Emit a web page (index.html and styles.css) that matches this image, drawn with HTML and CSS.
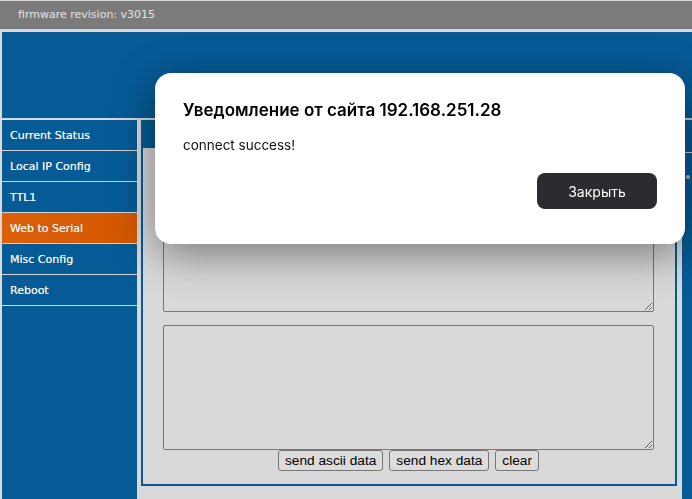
FILE: index.html
```html
<!DOCTYPE html>
<html lang="ru">
<head>
    <meta charset="UTF-8">
    <meta name="viewport" content="width=device-width, initial-scale=1.0">
    <title>Web to Serial</title>
    <link rel="stylesheet" href="styles.css">
</head>
<body>
    <div class="page">
        <div class="topbar">firmware revision: v3015</div>
        <div class="header"></div>

        <div class="main">
            <ul class="menu">
                <li>Current Status</li>
                <li>Local IP Config</li>
                <li>TTL1</li>
                <li class="active">Web to Serial</li>
                <li>Misc Config</li>
                <li>Reboot</li>
            </ul>

            <div class="panel">
                <div class="panel-title"></div>
                <div class="panel-body">
                    <textarea class="term" id="rx"></textarea>
                    <textarea class="term" id="tx"></textarea>
                    <div class="actions">
                        <button>send ascii data</button>
                        <button>send hex data</button>
                        <button>clear</button>
                    </div>
                </div>
            </div>

            <div class="side">
                <div class="side-item"></div>
                <div class="side-item"><span class="dot"></span></div>
            </div>
        </div>
    </div>

    <div class="dialog">
        <h2>Уведомление от сайта 192.168.251.28</h2>
        <p>connect success!</p>
        <div class="dialog-foot">
            <button class="btn-close">Закрыть</button>
        </div>
    </div>
</body>
</html>
```

FILE: styles.css
```css
html, body {
    margin: 0;
    padding: 0;
    overflow: hidden;
}
body {
    background: #d9d9d9;
    font-family: "DejaVu Sans", Verdana, sans-serif;
    height: 499px;
}
.page {
    width: 692px;
    padding-top: 1px;
}
.topbar {
    background: #7b7b7b;
    color: #e4e4e4;
    font-size: 11px;
    height: 28px;
    line-height: 28px;
    padding-left: 18px;
    box-sizing: border-box;
    margin-bottom: 3px;
    padding-bottom: 2px;
}
.header {
    background: #065b97;
    height: 86px;
    margin-left: 2px;
    margin-bottom: 2px;
}
.main {
    display: flex;
    align-items: flex-start;
    margin-left: 2px;
    height: 400px;
}
.menu {
    list-style: none;
    margin: 0;
    padding: 0;
    height: 400px;
    background: #065b97;
    flex: 0 0 135px;
}
.menu li {
    height: 30px;
    line-height: 31px;
    padding-left: 8px;
    color: #f0f0f0;
    font-size: 11px;
    border-bottom: 1px solid #d4d4d4;
    text-shadow: 0 0 0.3px #f0f0f0;
}
.menu li.active {
    background: linear-gradient(90deg, #db6008, #d45800);
}
.panel {
    flex: 0 0 536px;
    margin-left: 4px;
    border: 2px solid #065b97;
    box-sizing: border-box;
    background: #d9d9d9;
}
.panel-title {
    background: #065b97;
    height: 26px;
}
.panel-body {
    padding: 39px 21px 13px 20px;
}
.term {
    display: block;
    width: 491px;
    height: 125px;
    box-sizing: border-box;
    background: #d9d9d9;
    border: 1px solid #767676;
    border-radius: 2px;
    margin: 0 0 13px;
    resize: both;
}
#tx {
    margin-bottom: 0;
}
.actions {
    display: flex;
    justify-content: center;
    gap: 6px;
}
.actions button {
    font-family: "Liberation Sans", Arial, sans-serif;
    font-size: 13.7px;
    height: 21px;
    padding: 0 6px;
    background: #dcdcdc;
    border: 1px solid #767676;
    border-radius: 3px;
    color: #000;
}
.side {
    flex: 1;
    margin-left: 5px;
    margin-top: -2px;
    height: 402px;
    background: #065b97;
}
.side-item {
    height: 32px;
    border-top: 2px solid #cfcfcf;
}
.side-item + .side-item {
    border-top: 1px solid #cfcfcf;
}
.dot {
    display: block;
    width: 4px;
    height: 4px;
    border-radius: 50%;
    background: #bcbcbc;
    margin: 22px 0 0 4px;
}

/* alert window */
.dialog {
    position: fixed;
    left: 155px;
    top: 73px;
    width: 530px;
    height: 171px;
    box-sizing: border-box;
    padding: 26px 28px 0 28px;
    background: #fff;
    border-radius: 16px;
    box-shadow: 0 10px 44px rgba(0, 0, 0, 0.45);
    font-family: Inter, "Noto Sans", sans-serif;
    color: #000;
}
.dialog h2 {
    margin: 0;
    font-size: 17px;
    font-weight: 600;
    line-height: 22px;
}
.dialog p {
    margin: 15px 0 0;
    font-size: 13.5px;
    line-height: 18px;
    color: #111;
}
.dialog-foot {
    display: flex;
    justify-content: flex-end;
    margin-top: 19px;
}
.btn-close {
    width: 120px;
    height: 36px;
    background: #2c2b30;
    color: #fff;
    border: none;
    border-radius: 8px;
    font-family: Inter, "Noto Sans", sans-serif;
    font-size: 14px;
}
```
